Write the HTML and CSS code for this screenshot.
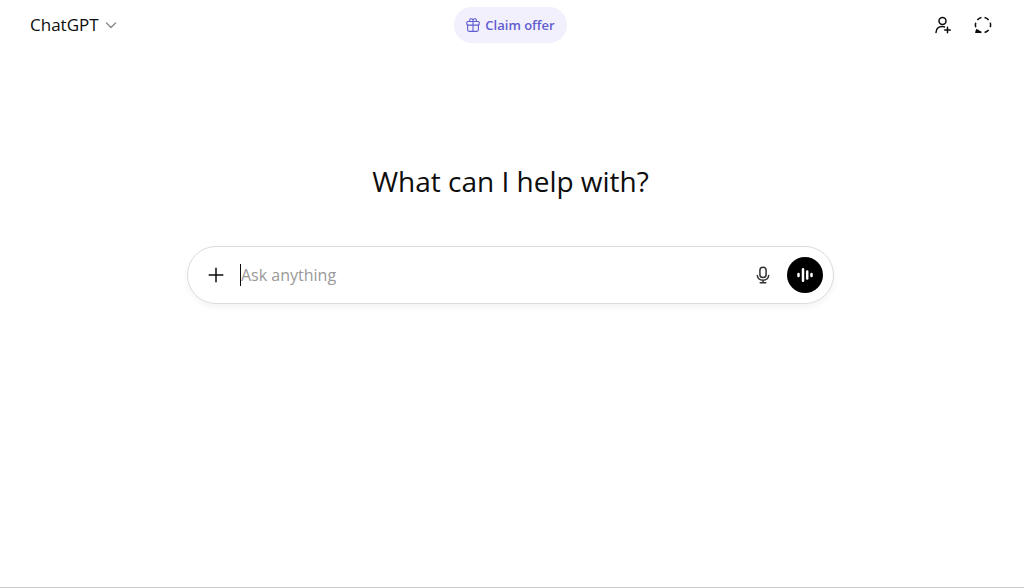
FILE: index.html
```html
<!DOCTYPE html>
<html lang="en">
<head>
	<meta charset="UTF-8">
	<meta name="viewport" content="width=device-width, initial-scale=1.0">
	<title>ChatGPT</title>
	<link rel="stylesheet" href="styles.css">
</head>
<body>

<div id="app">
	<header class="topbar">
		<button class="model" type="button">
			ChatGPT
			<svg width="12" height="12" viewBox="0 0 12 12"><path d="M1.500 4L6 8.500 10.500 4"/></svg>
		</button>
		<button class="offer" type="button">
			<svg width="14" height="16" viewBox="0 0 14 16">
				<rect x="0.8" y="4.500" width="12.400" height="3.600" rx="1"/>
				<path d="M1.600 8.100v4.700a1.600 1.600 0 0 0 1.600 1.600h7.600a1.600 1.600 0 0 0 1.600-1.600V8.100M7 4.500v9.900M7 4.500V3.200A1.700 1.700 0 1 0 4 4.500M7 3.200A1.700 1.700 0 1 1 10 4.500"/>
			</svg>
			Claim offer
		</button>
		<div class="actions">
			<button type="button" aria-label="Add people">
				<svg width="20" height="20" viewBox="0 0 20 20">
					<circle cx="9.500" cy="5.900" r="3.500"/>
					<path d="M3 17.500c.2-3.600 2.600-5.900 6.400-5.900.8 0 1.500.1 2.100.3M14.500 12.200v5.600M11.700 15h5.600"/>
				</svg>
			</button>
			<button type="button" aria-label="Temporary chat">
				<svg width="20" height="20" viewBox="0 0 20 20">
					<circle class="ring" cx="10" cy="10" r="7.600" pathLength="60"/>
					<path class="fill" d="M2.800 18c-.6 0-.8-.5-.6-1l1-3 1.100.2 1.200 1.800 2.500.8-.4 1.200z"/>
				</svg>
			</button>
		</div>
	</header>

	<main>
		<h1>What can I help with?</h1>
		<form class="composer">
			<button class="tool" type="button" aria-label="Add files">
				<svg width="20" height="20" viewBox="0 0 20 20"><path d="M10 3.200v13.600M3.200 10h13.600"/></svg>
			</button>
			<input type="text" placeholder="Ask anything" aria-label="Ask anything">
			<button class="tool" type="button" aria-label="Dictate">
				<svg class="mic" width="20" height="20" viewBox="0 0 20 20">
					<rect x="6.900" y="2.200" width="6.200" height="10.400" rx="3.100"/>
					<path d="M4.300 10.500c.4 2.900 2.700 4.700 5.700 4.700s5.300-1.800 5.700-4.700M10 15.200v2.500M7.200 17.800h5.600"/>
				</svg>
			</button>
			<button class="voice" type="button" aria-label="Voice mode">
				<svg width="20" height="20" viewBox="0 0 20 20"><path d="M3.500 9.100v1.800M8 4.200v11.600M12.200 6.500v7M16.500 8.900v2.200"/></svg>
			</button>
		</form>
	</main>
</div>

</body>
</html>
```

FILE: styles.css
```css
* {
	box-sizing: border-box;
}

body {
	margin: 0;
	background-color: #fff;
	color: #0d0d0d;
	font-family: "Segoe UI", "Open Sans", "Noto Sans", sans-serif;
}

#app {
	min-height: 100vh;
	padding-right: 3px;
	border-bottom: 1px solid #c8c8c8;
}

button {
	display: flex;
	align-items: center;
	justify-content: center;
	padding: 0;
	border: none;
	background: none;
	color: inherit;
	font-family: inherit;
	cursor: pointer;
}

svg {
	flex: none;
	fill: none;
	stroke: currentColor;
	stroke-width: 1.5;
	stroke-linecap: round;
	stroke-linejoin: round;
}

.fill {
	fill: currentColor;
	stroke: none;
}

.ring {
	stroke-dasharray: 6 4;
	stroke-dashoffset: 3;
	stroke-linecap: butt;
}

.topbar {
	display: grid;
	grid-template-columns: 1fr auto 1fr;
	align-items: center;
	height: 49px;
	padding: 0 28px;
}

.model {
	justify-self: start;
	gap: 6px;
	margin-left: 2px;
	font-size: 17px;
}

.model svg {
	color: #8f8f8f;
}

.offer {
	gap: 5px;
	height: 36px;
	padding: 0 12px;
	border-radius: 18px;
	background-color: #f1f0fc;
	color: #615ccf;
	font-size: 13px;
	font-weight: 600;
}

.offer svg {
	stroke-width: 1.1;
}

.actions {
	display: flex;
	justify-content: flex-end;
	gap: 20px;
}

main {
	padding: 110px 16px 0;
}

h1 {
	margin: 0 0 43px;
	font-size: 28px;
	font-weight: 400;
	line-height: 44px;
	text-align: center;
}

.composer {
	display: flex;
	align-items: center;
	max-width: 647px;
	height: 58px;
	margin: 0 auto;
	padding: 0 10px;
	border: 1px solid #dcdcdc;
	border-radius: 29px;
	box-shadow: 0 3px 6px rgba(0, 0, 0, 0.05);
}

.tool {
	width: 36px;
	height: 36px;
}

.mic {
	color: #333;
}

.composer input {
	flex: 1;
	min-width: 0;
	height: 22px;
	margin: 0 6px;
	padding: 0;
	border: none;
	border-left: 1px solid #0d0d0d;
	outline: none;
	background: none;
	color: inherit;
	font-family: inherit;
	font-size: 16px;
}

.composer input::placeholder {
	color: #999;
}

.voice {
	width: 36px;
	height: 36px;
	margin-left: 6px;
	border-radius: 50%;
	background-color: #000;
	color: #fff;
}

.voice svg {
	stroke-width: 2.5;
}
```
